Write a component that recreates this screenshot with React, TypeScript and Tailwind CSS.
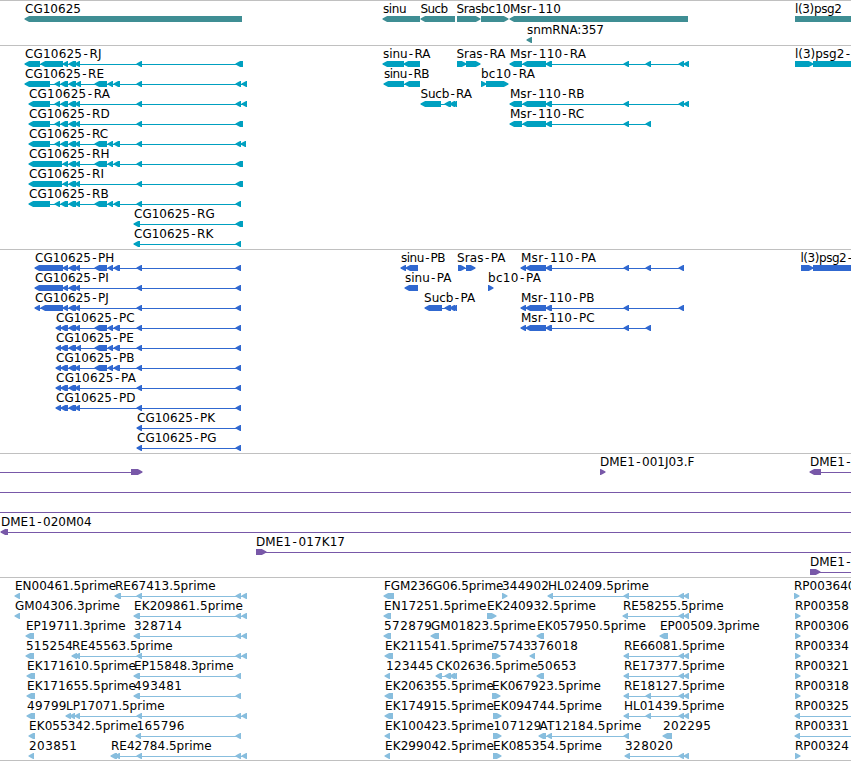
interface Feature {
  name?: string;
  dir: "left" | "right";
  blocks: [number, number][];
  // intron line limits, when the feature runs past the visible window
  from?: number;
  to?: number;
  labelX?: number;
  labelWidth?: number;
}

interface Row {
  y: number;
  features: Feature[];
}

const WIDTH = 851;

// "25-40 41-63" -> [[25, 40], [41, 63]]
function parse(spans: string): [number, number][] {
  return spans
    .split(" ")
    .filter(Boolean)
    .map((s) => s.split("-").map(Number) as [number, number]);
}

const L = (name: string, spans: string, extra: Partial<Feature> = {}): Feature => ({
  name,
  dir: "left",
  blocks: parse(spans),
  ...extra,
});

const R = (name: string, spans: string, extra: Partial<Feature> = {}): Feature => ({
  name,
  dir: "right",
  blocks: parse(spans),
  ...extra,
});

const rows = (list: Feature[][], pitch = 20): Row[] =>
  list.map((features, i) => ({ y: 15 + i * pitch, features }));

const PAIR = "69-76 75-80";
const MID = "95-107 108-113 114-120";
const TAIL = "236-241 242-247";
const MSR_END = "679-684 684-689";
const SUCB_END = "445-451 450-455 452-457";

const GENES = rows(
  [
    [
      L("CG10625", "25-242"),
      L("sinu", "383-420", { labelWidth: 23.5 }),
      L("Sucb", "421-455", { labelX: 420.5, labelWidth: 27.5 }),
      R("Sras", "457-480", { labelX: 456.5, labelWidth: 25 }),
      R("bc10", "481-508", { labelWidth: 29.5 }),
      L("Msr-110", "510-688"),
      R("l(3)psg2", "795-870", { labelWidth: 47 }),
    ],
    [L("snmRNA:357", "527-532", { labelWidth: 77 })],
  ],
  21,
);

const TRANSCRIPTS = rows([
  [
    L("CG10625-RJ", `25-40 41-63 63-68 ${PAIR} 137-142 236-243`, { labelWidth: 76.5 }),
    L("sinu-RA", "383-404 404-420", { labelWidth: 47.5 }),
    R("Sras-RA", "457-466 466-480", { labelX: 456.5, labelWidth: 49 }),
    L("Msr-110-RA", `510-522 523-546 546-552 624-629 646-651 ${MSR_END}`, { labelWidth: 76 }),
    R("l(3)psg2-", "795-813 813-880", { labelWidth: 55 }),
  ],
  [
    L("CG10625-RE", `25-50 55-60 61-68 69-76 76-81 ${MID} 137-142 ${TAIL}`),
    L("sinu-RB", "384-404 405-420", { labelWidth: 45.5 }),
    R("bc10-RA", "481-486 486-508", { labelWidth: 54 }),
  ],
  [
    L("CG10625-RA", `29-50 55-60 61-68 ${PAIR} 137-142 ${TAIL}`, { labelWidth: 81 }),
    L("Sucb-RA", `421-441 ${SUCB_END}`, { labelX: 420.5, labelWidth: 51.5 }),
    L("Msr-110-RB", `510-522 523-546 546-552 624-629 ${MSR_END}`),
  ],
  [
    L("CG10625-RD", `29-50 55-60 61-68 ${PAIR} 137-142 236-243`),
    L("Msr-110-RC", "510-522 523-546 546-552 624-629 646-651"),
  ],
  [L("CG10625-RC", `29-50 55-60 61-68 ${PAIR} ${MID} 137-142 236-241 241-246`)],
  [L("CG10625-RH", `29-62 63-68 ${PAIR} ${MID} 137-142 236-243`)],
  [L("CG10625-RI", `29-62 63-68 ${PAIR} 137-142 236-243`)],
  [L("CG10625-RB", `29-50 55-60 61-68 ${PAIR} ${MID} 137-142 236-241`)],
  [L("CG10625-RG", "134-140 236-243")],
  [L("CG10625-RK", "134-140 236-241")],
]);

const PROTEINS = rows([
  [
    L("CG10625-PH", `35-63 63-68 ${PAIR} ${MID} 137-142 236-241`),
    L("sinu-PB", "401-406 406-418", { labelWidth: 44.5 }),
    R("Sras-PA", "458-465 466-475", { labelX: 457, labelWidth: 48.5 }),
    L("Msr-110-PA", "521-526 526-546 546-552 624-629 646-651 679-684", { labelWidth: 75 }),
    R("l(3)psg2-", "801-813 813-880", { labelX: 800.5, labelWidth: 51.5 }),
  ],
  [
    L("CG10625-PI", `35-63 63-68 ${PAIR} 137-142 236-241`),
    L("sinu-PA", "405-418", { labelWidth: 46.5 }),
    R("bc10-PA", "488-493", { labelWidth: 53 }),
  ],
  [
    L("CG10625-PJ", `35-40 41-63 63-68 ${PAIR} 137-142 236-241`),
    L("Sucb-PA", `425-442 ${SUCB_END}`, { labelX: 424 }),
    L("Msr-110-PB", "521-526 526-546 546-552 624-629 679-684"),
  ],
  [
    L("CG10625-PC", `56-61 61-68 ${PAIR} ${MID} 137-142 236-241`),
    L("Msr-110-PC", "521-526 526-546 546-552 624-629 646-651"),
  ],
  [L("CG10625-PE", `56-61 61-68 69-76 76-81 ${MID} 137-142 236-241`)],
  [L("CG10625-PB", `56-61 61-68 ${PAIR} ${MID} 137-142 236-241`)],
  [L("CG10625-PA", `56-61 61-68 ${PAIR} 137-142 236-241`, { labelWidth: 80 })],
  [L("CG10625-PD", `56-61 61-68 ${PAIR} 137-142 236-241`)],
  [L("CG10625-PK", "137-142 236-241")],
  [L("CG10625-PG", "137-142 236-241")],
]);

const CLONES = rows([
  [
    R("", "131-142", { from: 0 }),
    R("DME1-001J03.F", "600-605"),
    L("DME1-", "810-821", { to: WIDTH }),
  ],
  [L("", "", { from: 0, to: WIDTH })],
  [L("", "", { from: 0, to: WIDTH })],
  [L("DME1-020M04", "1-8", { to: WIDTH })],
  [R("DME1-017K17", "256-266", { to: WIDTH, labelWidth: 89 })],
  [R("DME1-", "810-820", { to: WIDTH })],
]);

const ESTS = rows([
  [
    L("EN00461.5prime", "15-20"),
    L("RE67413.5prime", `115-121 137-142 ${TAIL}`),
    L("FGM236G06.5prime", "384-394", { labelWidth: 119.5 }),
    R("344902", "502-507", { labelWidth: 47 }),
    L("HL02409.5prime", `548-553 624-629 ${MSR_END}`, { labelWidth: 101 }),
    R("RP003640", "794-799"),
  ],
  [
    L("GM04306.3prime", "15-20", { labelWidth: 105 }),
    L("EK209861.5prime", `134-140 ${TAIL}`, { labelWidth: 109 }),
    L("EN17251.5prime", "384-391", { labelWidth: 102.5 }),
    R("EK240932.5prime", "487-496", { labelWidth: 109 }),
    L("RE58255.5prime", `623-628 ${MSR_END}`),
    R("RP00358", "795-800"),
  ],
  [
    L("EP19711.3prime", "26-34"),
    L("328714", `134-140 ${TAIL}`, { labelWidth: 48 }),
    L("572879", "384-391", { labelWidth: 48 }),
    L("GM01823.5prime", "431-439", { labelWidth: 105 }),
    L("EK057950.5prime", "537-544", { labelWidth: 109 }),
    L("EP00509.3prime", "660-668"),
    R("RP00306", "795-800"),
  ],
  [
    L("515254", "26-34", { labelWidth: 47 }),
    L("RE45563.5prime", `72-77 75-80 137-142 ${TAIL}`),
    L("EK211541.5prime", "385-393", { labelWidth: 109 }),
    R("75743", "492-500", { labelWidth: 39 }),
    L("376018", "530-535", { labelWidth: 48 }),
    L("RE66081.5prime", `624-629 ${MSR_END}`),
    R("RP00334", "795-800"),
  ],
  [
    L("EK171610.5prime", "27-35", { labelWidth: 109 }),
    L("EP15848.3prime", "134-140 236-241"),
    L("123445", "385-390", { labelX: 386, labelWidth: 47.5 }),
    L("CK02636.5prime", `436-442 ${SUCB_END}`, { labelWidth: 102 }),
    L("50653", "537-544", { labelWidth: 39.5 }),
    L("RE17377.5prime", `624-629 ${MSR_END}`),
    R("RP00321", "795-800"),
  ],
  [
    L("EK171655.5prime", "27-35", { labelWidth: 109 }),
    L("493481", "134-140 236-241", { labelWidth: 48 }),
    L("EK206355.5prime", "385-393", { labelWidth: 109 }),
    R("EK067923.5prime", "492-500", { labelWidth: 109 }),
    L("RE18127.5prime", `624-629 646-651 ${MSR_END}`),
    R("RP00318", "795-800"),
  ],
  [
    L("49799", "27-35", { labelWidth: 39.5 }),
    L("LP17071.5prime", `66-71 70-75 75-80 137-142 ${TAIL}`),
    L("EK174915.5prime", "385-393", { labelWidth: 109 }),
    R("EK094744.5prime", "493-501", { labelWidth: 109 }),
    L("HL01439.5prime", `624-629 646-651 ${MSR_END}`),
    L("RP00325", "795-800", { to: WIDTH }),
  ],
  [
    L("EK055342.5prime", "29-35", { labelWidth: 109 }),
    L("165796", "136-141 236-241", { labelX: 136.5, labelWidth: 48 }),
    L("EK100423.5prime", "385-390", { labelWidth: 109 }),
    R("107129", "493-501", { labelX: 493.5, labelWidth: 48 }),
    L("AT12184.5prime", "539-546 547-552 624-629", { labelX: 539.5, labelWidth: 102 }),
    L("202295", "663-672", { labelWidth: 48 }),
    L("RP00331", "795-800", { to: WIDTH }),
  ],
  [
    L("203851", "29-34", { labelWidth: 48 }),
    L("RE42784.5prime", `111-117 115-120 137-142 ${TAIL}`),
    L("EK299042.5prime", "385-390", { labelWidth: 109 }),
    R("EK085354.5prime", "493-501", { labelWidth: 109 }),
    L("328020", `625-630 ${MSR_END}`, { labelWidth: 48 }),
    R("RP00324", "795-800"),
  ],
]);

// hyphens get extra room on both sides
function advances(text: string) {
  return [...text].map((c, i) => (c === "-" || text[i - 1] === "-" ? 1.4 : 0)).join(" ");
}

// arrow head keeps a blunt shoulder so that short blocks still read as solid
function arrow([a, b]: [number, number], y: number, dir: Feature["dir"]) {
  const [tip, tail, s] = dir === "left" ? [a - 0.5, b, 1] : [b + 0.5, a, -1];
  return [
    [tip, y + 2.6],
    [tip + 4.6 * s, y],
    [tail, y],
    [tail, y + 6],
    [tip + 4.6 * s, y + 6],
    [tip, y + 3.6],
  ]
    .map((p) => p.join(","))
    .join(" ");
}

function Glyph({ feature, y }: { feature: Feature; y: number }) {
  const { blocks, dir } = feature;
  const from = feature.from ?? blocks[0][0];
  const to = feature.to ?? blocks[blocks.length - 1][1];
  const labelX = feature.labelX ?? from;

  return (
    <g>
      {(blocks.length !== 1 || feature.from !== undefined || feature.to !== undefined) && (
        <rect x={from} y={y + 3} width={to - from} height={1} />
      )}
      {blocks.map((b, i) => (
        <polygon key={i} points={arrow(b, y, dir)} />
      ))}
      {feature.name && (
        <text
          x={labelX}
          y={y - 3}
          dx={advances(feature.name)}
          textLength={feature.labelWidth}
          className="fill-black"
        >
          {feature.name}
        </text>
      )}
    </g>
  );
}

function Track({ data, className }: { data: Row[]; className: string }) {
  return (
    <section className={`border-t border-[#c0c0c0] overflow-hidden ${className}`}>
      <svg className="block w-full h-full font-['DejaVu_Sans',sans-serif] text-[12px]">
        {data.map((row, i) => (
          <g key={i}>
            {row.features.map((f, j) => (
              <Glyph key={j} feature={f} y={row.y} />
            ))}
          </g>
        ))}
      </svg>
    </section>
  );
}

export default function App() {
  return (
    <main className="flex flex-col w-[851px] h-[761px] bg-white overflow-hidden border-b border-[#c0c0c0]">
      <Track data={GENES} className="h-[45px] fill-[#3f8e94]" />
      <Track data={TRANSCRIPTS} className="h-[204px] fill-[#00a0c0]" />
      <Track data={PROTEINS} className="h-[204px] fill-[#3068d0]" />
      <Track data={CLONES} className="h-[124px] fill-[#7858a8]" />
      <Track data={ESTS} className="h-[183px] fill-[#88bede]" />
    </main>
  );
}
